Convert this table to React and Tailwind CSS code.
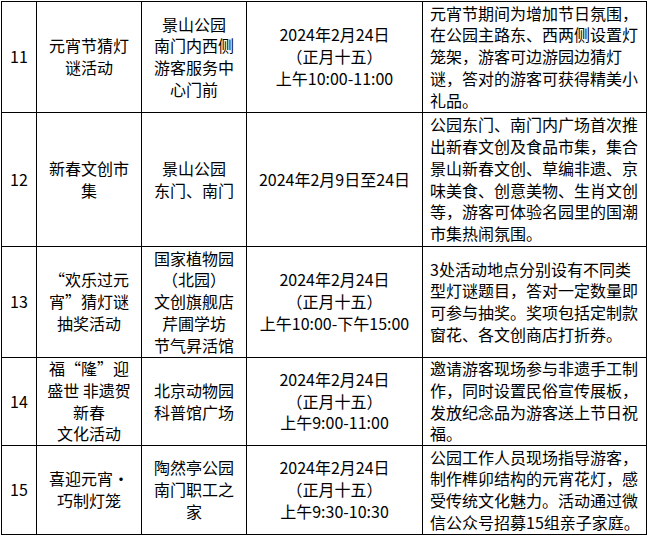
const rows = [
  {
    no: '11',
    h: 'h-[111px]',
    name: ['元宵节猜灯', '谜活动'],
    place: ['景山公园', '南门内西侧', '游客服务中', '心门前'],
    time: ['2024年2月24日', '（正月十五）', '上午10:00-11:00'],
    desc: ['元宵节期间为增加节日氛围，', '在公园主路东、西两侧设置灯', '笼架，游客可边游园边猜灯', '谜，答对的游客可获得精美小', '礼品。'],
  },
  {
    no: '12',
    h: 'h-[134px]',
    name: ['新春文创市', '集'],
    place: ['景山公园', '东门、南门'],
    time: ['2024年2月9日至24日'],
    desc: ['公园东门、南门内广场首次推', '出新春文创及食品市集，集合', '景山新春文创、草编非遗、京', '味美食、创意美物、生肖文创', '等，游客可体验名园里的国潮', '市集热闹氛围。'],
  },
  {
    no: '13',
    h: 'h-[111px]',
    name: ['“欢乐过元', '宵”猜灯谜', '抽奖活动'],
    place: ['国家植物园', '（北园）', '文创旗舰店', '芹圃学坊', '节气昇活馆'],
    time: ['2024年2月24日', '（正月十五）', '上午10:00-下午15:00'],
    desc: ['3处活动地点分别设有不同类', '型灯谜题目，答对一定数量即', '可参与抽奖。奖项包括定制款', '窗花、各文创商店打折券。'],
  },
  {
    no: '14',
    h: 'h-[88px]',
    name: ['福“隆”迎', '盛世 非遗贺', '新春', '文化活动'],
    place: ['北京动物园', '科普馆广场'],
    time: ['2024年2月24日', '（正月十五）', '上午9:00-11:00'],
    desc: ['邀请游客现场参与非遗手工制', '作，同时设置民俗宣传展板，', '发放纪念品为游客送上节日祝', '福。'],
  },
  {
    no: '15',
    h: 'h-[89px]',
    name: ['喜迎元宵·', '巧制灯笼'],
    place: ['陶然亭公园', '南门职工之', '家'],
    time: ['2024年2月24日', '（正月十五）', '上午9:30-10:30'],
    desc: ['公园工作人员现场指导游客，', '制作榫卯结构的元宵花灯，感', '受传统文化魅力。活动通过微', '信公众号招募15组亲子家庭。'],
  },
]

function Cell({ lines, left }) {
  return (
    <div className={`border-r border-b border-black flex flex-col justify-center ${left ? 'items-start pl-[7px]' : 'items-center'}`}>
      {lines.map((l, i) => (
        <div key={i} className="whitespace-nowrap leading-[21.7px]">{l}</div>
      ))}
    </div>
  )
}

export default function App() {
  return (
    <div className="w-[649px] h-[536px] bg-white text-black text-[16px] font-['Noto_Sans_CJK_SC',sans-serif] pl-px pt-px">
      <div className="w-[646px] border-l border-t border-black">
        {rows.map(r => (
          <div key={r.no} className={`grid grid-cols-[35px_105px_105px_176px_224px] ${r.h}`}>
            <Cell lines={[r.no]} />
            <Cell lines={r.name} />
            <Cell lines={r.place} />
            <Cell lines={r.time} />
            <Cell lines={r.desc} left />
          </div>
        ))}
      </div>
    </div>
  )
}
